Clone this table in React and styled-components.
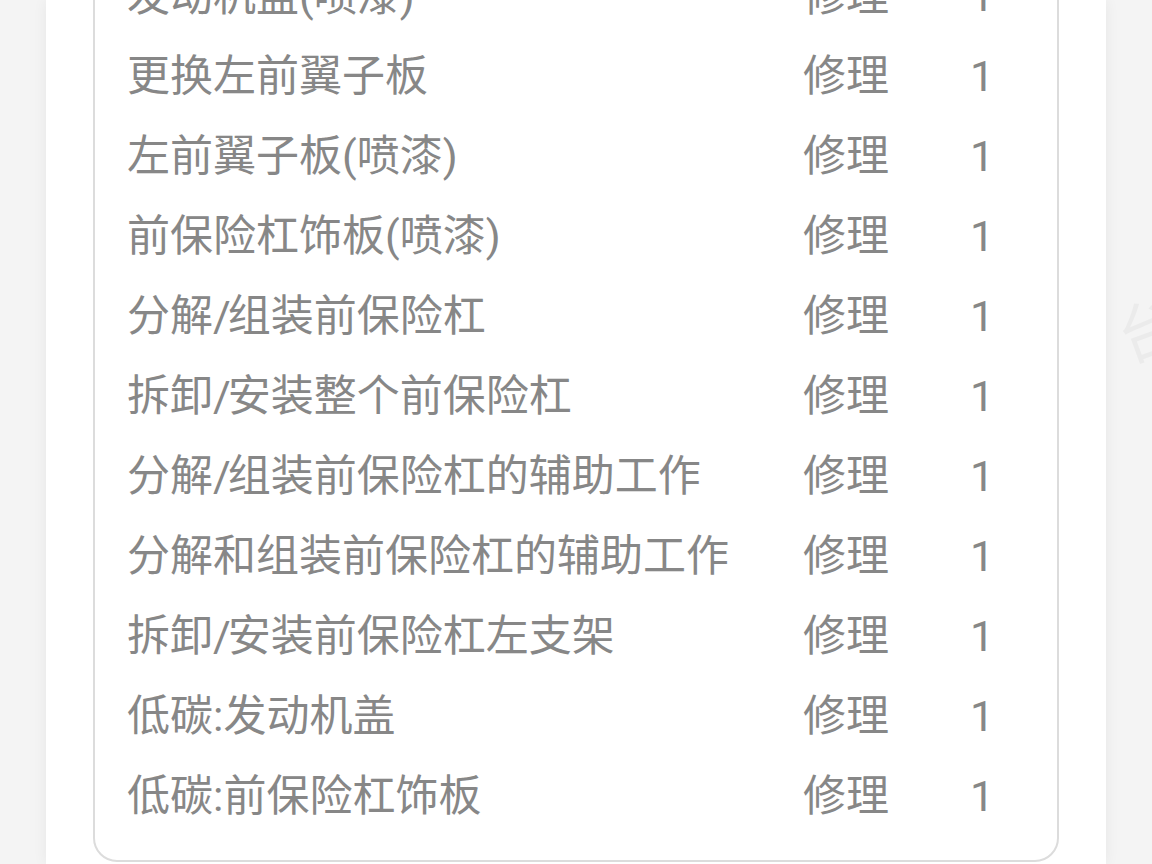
import React from 'react'
import styled, {createGlobalStyle} from 'styled-components'

const Global = createGlobalStyle`
  html, body {
    margin: 0;
    padding: 0;
    background: #f4f4f4;
    overflow: hidden;
  }
  body {
    font-family: Roboto, "Noto Sans CJK SC", sans-serif;
  }
`

const items = [
  '发动机盖(喷漆)',
  '更换左前翼子板',
  '左前翼子板(喷漆)',
  '前保险杠饰板(喷漆)',
  '分解/组装前保险杠',
  '拆卸/安装整个前保险杠',
  '分解/组装前保险杠的辅助工作',
  '分解和组装前保险杠的辅助工作',
  '拆卸/安装前保险杠左支架',
  '低碳:发动机盖',
  '低碳:前保险杠饰板',
]

// the slash in the reference sits tighter than Roboto's
const renderName = name =>
  name.split('/').flatMap((part, i) => (i === 0 ? [part] : [<Slash key={i}>/</Slash>, part]))

const App = () => (
  <>
    <Global />
    <Page>
      <Card>
        <List>
          {items.map((name, i) => (
            <Row key={i}>
              <Name>{renderName(name)}</Name>
              <Cell>修理</Cell>
              <Cell>1</Cell>
            </Row>
          ))}
        </List>
      </Card>
      <Watermark>台</Watermark>
    </Page>
  </>
)

const Page = styled.div`
  position: relative;
  height: 864px;
  overflow: hidden;
  padding: 0 46px;
`

const Card = styled.div`
  display: flow-root;
  background: #ffffff;
  height: 100%;
  box-shadow: 0 0 14px rgba(0, 0, 0, 0.06);
  padding: 0 47px;
`

const List = styled.div`
  margin-top: -46px;
  border: 2px solid #dcdcdc;
  border-radius: 24px;
  padding: 0 0 24px 32px;
`

const Row = styled.div`
  display: grid;
  grid-template-columns: 676px 167px auto;
  height: 80px;
  align-items: center;
  font-size: 43px;
  line-height: 80px;
  color: #878787;
`

const Name = styled.span`
  white-space: nowrap;
`

const Slash = styled.span`
  letter-spacing: -3px;
`

const Cell = styled.span`
  white-space: nowrap;
`

const Watermark = styled.div`
  position: absolute;
  left: 1116px;
  top: 280px;
  font-size: 64px;
  color: rgba(0, 0, 0, 0.035);
  transform: rotate(-20deg);
  pointer-events: none;
`

export default App
